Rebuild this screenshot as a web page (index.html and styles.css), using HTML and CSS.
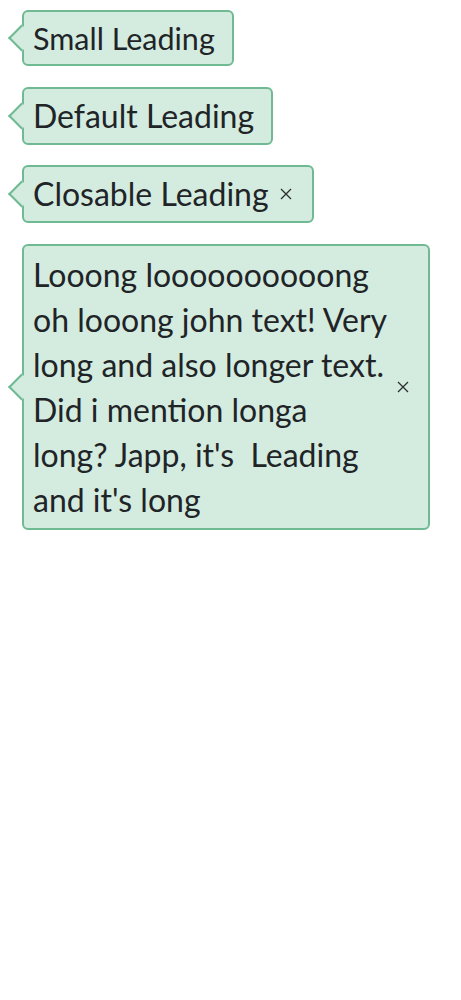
FILE: index.html
```html
<!DOCTYPE html>
<html>
<head>
<meta charset="utf-8">
<link rel="stylesheet" href="styles.css">
</head>
<body>
<div class="list">
  <div class="tag tag-small"><span class="label">Small Leading</span></div>
  <div class="tag tag-default"><span class="label">Default Leading</span></div>
  <div class="tag tag-default tag-closable"><span class="label">Closable Leading</span><svg class="close" viewBox="0 0 12 12" width="12" height="12"><path d="M1 1L11 11M11 1L1 11" /></svg></div>
  <div class="tag tag-closable tag-long"><span class="label">Looong loooooooooong oh looong john text! Very long and also longer text. Did i mention longa long? Japp, it's&nbsp; Leading and it's long</span><svg class="close" viewBox="0 0 12 12" width="12" height="12"><path d="M1 1L11 11M11 1L1 11" /></svg></div>
</div>
</body>
</html>
```
FILE: styles.css
```css
html, body {
  margin: 0;
  padding: 0;
  background: #ffffff;
}
body {
  font-family: Lato, "Noto Sans", sans-serif;
  color: #1f2427;
}
.list {
  display: flex;
  flex-direction: column;
  align-items: flex-start;
  gap: 20.7px;
  padding: 10px 31px 0 22px;
}
.tag {
  position: relative;
  display: flex;
  align-items: center;
  gap: 8px;
  background: #d4ebdf;
  border: 2px solid #6fba92;
  border-radius: 6px;
  padding: 3px 17px 3px 9px;
}
.tag::before {
  content: "";
  position: absolute;
  left: -12px;
  top: 50%;
  width: 17px;
  height: 17px;
  background: #d4ebdf;
  border-left: 2px solid #6fba92;
  border-bottom: 2px solid #6fba92;
  transform: translateY(-50%) rotate(45deg);
}
.label {
  position: relative;
}
.tag-small {
  font-size: 30.5px;
  line-height: 45px;
  padding-top: 3.5px;
  padding-bottom: 3.5px;
}
.tag-default {
  font-size: 32px;
  line-height: 48px;
}
.tag-closable {
  gap: 11px;
  padding-right: 20px;
}
.tag-long {
  width: 100%;
  box-sizing: border-box;
  font-size: 32px;
  line-height: 45px;
  padding: 6px 19px 6px 9px;
  gap: 10px;
}
.tag-long .label {
  flex: 1;
}
.close {
  position: relative;
  flex: none;
  stroke: #2a2f31;
  stroke-width: 1.3;
  fill: none;
}
```
